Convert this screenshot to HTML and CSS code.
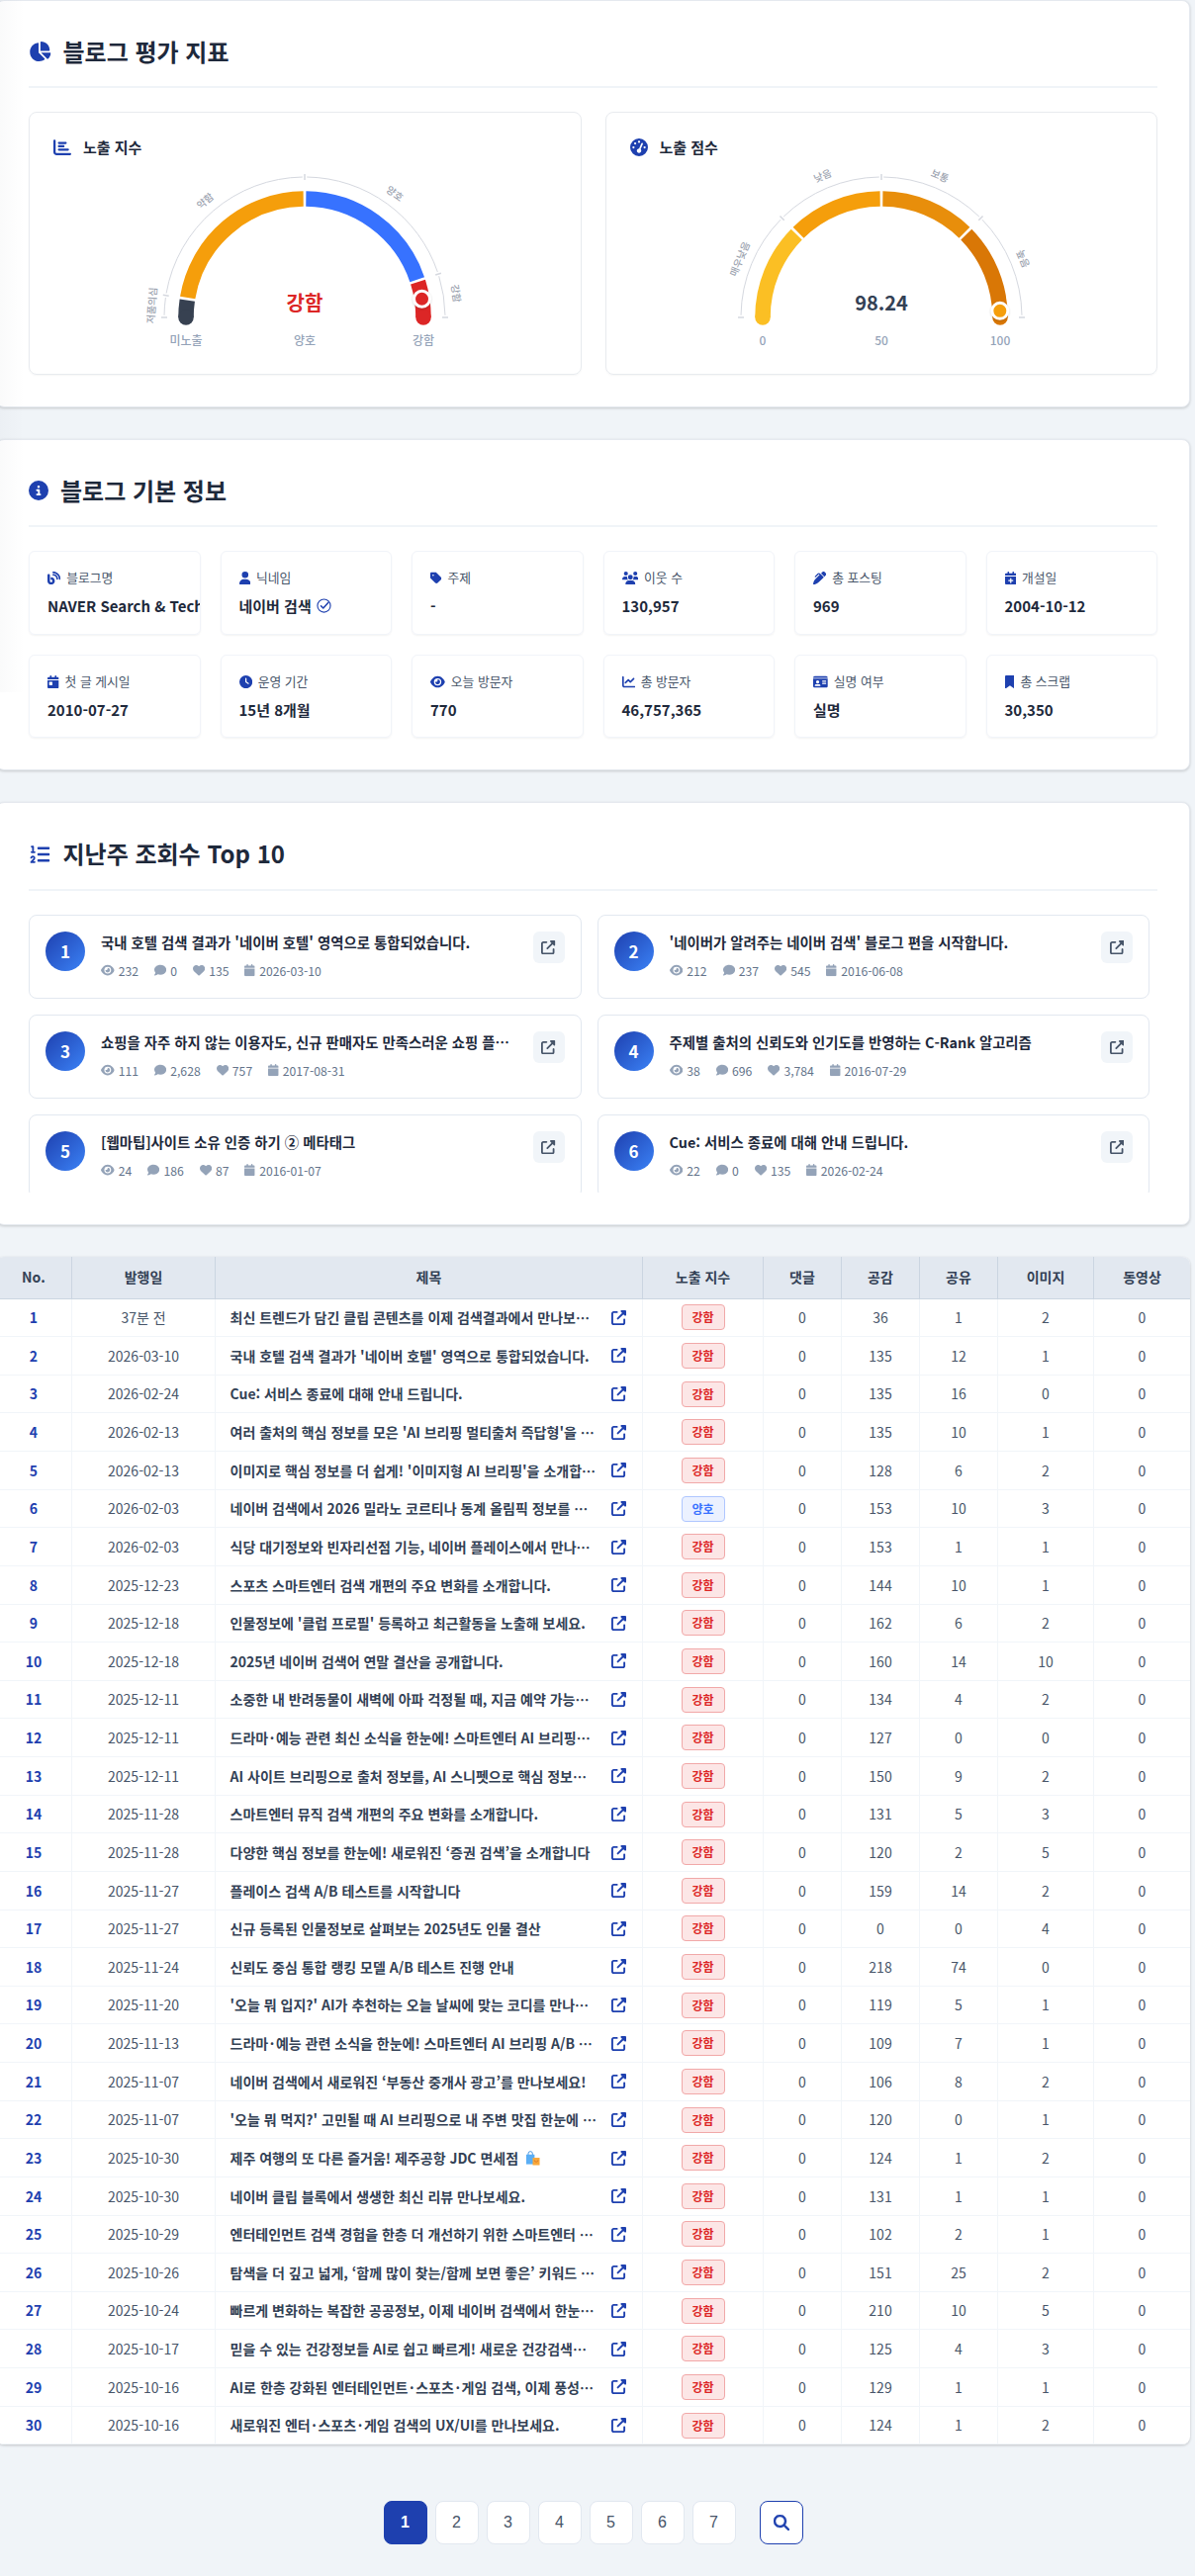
FILE: index.html
```html
<!DOCTYPE html>
<html lang="ko">
<head>
    <meta charset="UTF-8">
    <meta name="viewport" content="width=device-width, initial-scale=1.0">
    <title>블로그 분석</title>
    <link rel="stylesheet" href="styles.css">
</head>
<body>
    <svg class="sprite" aria-hidden="true">
        <symbol id="i-pie" viewBox="0 0 576 512"><path d="M304 240V16.6c0-9 7-16.6 16-16.6C443.7 0 544 100.3 544 224c0 9-7.6 16-16.6 16H304zM32 272C32 150.7 122.1 50.3 239 34.3c9.2-1.3 17 6.1 17 15.4V288L412.5 444.5c6.7 6.7 6.2 17.7-1.5 23.1C371.8 495.6 323.8 512 272 512C139.5 512 32 404.6 32 272zm526.4 16c9.3 0 16.6 7.8 15.4 17c-7.7 55.9-34.6 105.6-73.9 142.3c-6 5.6-15.4 5.2-21.2-.7L320 288H558.4z"/></symbol>
        <symbol id="i-bar" viewBox="0 0 512 512"><path d="M32 32c17.7 0 32 14.3 32 32V400c0 8.8 7.2 16 16 16H480c17.7 0 32 14.3 32 32s-14.3 32-32 32H80c-44.2 0-80-35.8-80-80V64C0 46.3 14.3 32 32 32zm96 96c0-17.7 14.3-32 32-32l192 0c17.7 0 32 14.3 32 32s-14.3 32-32 32H160c-17.7 0-32-14.3-32-32zm32 64H288c17.7 0 32 14.3 32 32s-14.3 32-32 32H160c-17.7 0-32-14.3-32-32s14.3-32 32-32zm0 96H416c17.7 0 32 14.3 32 32s-14.3 32-32 32H160c-17.7 0-32-14.3-32-32s14.3-32 32-32z"/></symbol>
        <symbol id="i-gauge" viewBox="0 0 512 512"><path d="M0 256a256 256 0 1 1 512 0A256 256 0 1 1 0 256zM288 96a32 32 0 1 0 -64 0 32 32 0 1 0 64 0zM256 416c35.3 0 64-28.7 64-64c0-17.4-6.9-33.1-18.1-44.6L366 161.7c5.3-12.1-.2-26.3-12.3-31.6s-26.3 .2-31.6 12.3L257.9 288c-.6 0-1.3 0-1.9 0c-35.3 0-64 28.7-64 64s28.7 64 64 64zM176 144a32 32 0 1 0 -64 0 32 32 0 1 0 64 0zM96 288a32 32 0 1 0 0-64 32 32 0 1 0 0 64zm352-32a32 32 0 1 0 -64 0 32 32 0 1 0 64 0z"/></symbol>
        <symbol id="i-info" viewBox="0 0 512 512"><path d="M256 512A256 256 0 1 0 256 0a256 256 0 1 0 0 512zM216 336h24V272H216c-13.3 0-24-10.7-24-24s10.7-24 24-24h48c13.3 0 24 10.7 24 24v88h8c13.3 0 24 10.7 24 24s-10.7 24-24 24H216c-13.3 0-24-10.7-24-24s10.7-24 24-24zm40-208a32 32 0 1 1 0 64 32 32 0 1 1 0-64z"/></symbol>
        <symbol id="i-blog" viewBox="0 0 512 512"><path d="M192 32c0 17.7 14.3 32 32 32c123.7 0 224 100.3 224 224c0 17.7 14.3 32 32 32s32-14.3 32-32C512 128.9 383.1 0 224 0c-17.7 0-32 14.3-32 32zm0 96c0 17.7 14.3 32 32 32c70.7 0 128 57.3 128 128c0 17.7 14.3 32 32 32s32-14.3 32-32c0-106-86-192-192-192c-17.7 0-32 14.3-32 32zM96 144c0-26.5-21.5-48-48-48S0 117.5 0 144V368c0 79.5 64.5 144 144 144s144-64.5 144-144s-64.5-144-144-144H128v96h16c26.5 0 48 21.5 48 48s-21.5 48-48 48s-48-21.5-48-48V144z"/></symbol>
        <symbol id="i-user" viewBox="0 0 448 512"><path d="M224 256A128 128 0 1 0 224 0a128 128 0 1 0 0 256zm-45.7 48C79.8 304 0 383.8 0 482.3C0 498.7 13.3 512 29.7 512H418.3c16.4 0 29.7-13.3 29.7-29.7C448 383.8 368.2 304 269.7 304H178.3z"/></symbol>
        <symbol id="i-tag" viewBox="0 0 448 512"><path d="M0 80V229.5c0 17 6.7 33.3 18.7 45.3l176 176c25 25 65.5 25 90.5 0L418.7 317.3c25-25 25-65.5 0-90.5l-176-176c-12-12-28.3-18.7-45.3-18.7H48C21.5 32 0 53.5 0 80zm112 32a32 32 0 1 1 0 64 32 32 0 1 1 0-64z"/></symbol>
        <symbol id="i-users" viewBox="0 0 640 512"><path d="M144 0a80 80 0 1 1 0 160A80 80 0 1 1 144 0zM512 0a80 80 0 1 1 0 160A80 80 0 1 1 512 0zM0 298.7C0 239.8 47.8 192 106.7 192h42.7c15.9 0 31 3.5 44.6 9.7c-1.3 7.2-1.9 14.7-1.9 22.3c0 38.2 16.8 72.5 43.3 96c-.2 0-.4 0-.7 0H21.3C9.6 320 0 310.4 0 298.7zM405.3 320c-.2 0-.4 0-.7 0c26.6-23.5 43.3-57.8 43.3-96c0-7.6-.7-15-1.9-22.3c13.6-6.3 28.7-9.7 44.6-9.7h42.7C592.2 192 640 239.8 640 298.7c0 11.8-9.6 21.3-21.3 21.3H405.3zM224 224a96 96 0 1 1 192 0 96 96 0 1 1 -192 0zM128 485.3C128 411.7 187.7 352 261.3 352H378.7C452.3 352 512 411.7 512 485.3c0 14.7-11.9 26.7-26.7 26.7H154.7c-14.7 0-26.7-11.9-26.7-26.7z"/></symbol>
        <symbol id="i-pen" viewBox="0 0 512 512"><path d="M453.3 19.3l39.4 39.4c25 25 25 65.5 0 90.5l-52.1 52.1 0 0-1-1 0 0-16-16-96-96-17-17 52.1-52.1c25-25 65.5-25 90.5 0zM241 114.9c-9.4-9.4-24.6-9.4-33.9 0L105 217c-9.4 9.4-24.6 9.4-33.9 0s-9.4-24.6 0-33.9L173.1 81c28.1-28.1 73.7-28.1 101.8 0L288 94.1l17 17 96 96 16 16 1 1-17 17L229.5 412.5c-48 48-109.2 80.8-175.8 94.1l-25 5c-7.9 1.6-16-.9-21.7-6.6s-8.1-13.8-6.6-21.7l5-25c13.3-66.6 46.1-127.8 94.1-175.8L254.1 128 241 114.9z"/></symbol>
        <symbol id="i-calendar" viewBox="0 0 448 512"><path d="M96 32V64H48C21.5 64 0 85.5 0 112v48H448V112c0-26.5-21.5-48-48-48H352V32c0-17.7-14.3-32-32-32s-32 14.3-32 32V64H160V32c0-17.7-14.3-32-32-32S96 14.3 96 32zM448 192H0V464c0 26.5 21.5 48 48 48H400c26.5 0 48-21.5 48-48V192z"/></symbol>
        <symbol id="i-calendar-plus" viewBox="0 0 448 512"><path fill-rule="evenodd" d="M96 32V64H48C21.5 64 0 85.5 0 112v48H448V112c0-26.5-21.5-48-48-48H352V32c0-17.7-14.3-32-32-32s-32 14.3-32 32V64H160V32c0-17.7-14.3-32-32-32S96 14.3 96 32zM448 192H0V464c0 26.5 21.5 48 48 48H400c26.5 0 48-21.5 48-48V192zM224 248c13.3 0 24 10.7 24 24v56h56c13.3 0 24 10.7 24 24s-10.7 24-24 24H248v56c0 13.3-10.7 24-24 24s-24-10.7-24-24V376H144c-13.3 0-24-10.7-24-24s10.7-24 24-24h56V272c0-13.3 10.7-24 24-24z"/></symbol>
        <symbol id="i-calendar-day" viewBox="0 0 448 512"><path fill-rule="evenodd" d="M96 32V64H48C21.5 64 0 85.5 0 112v48H448V112c0-26.5-21.5-48-48-48H352V32c0-17.7-14.3-32-32-32s-32 14.3-32 32V64H160V32c0-17.7-14.3-32-32-32S96 14.3 96 32zM448 192H0V464c0 26.5 21.5 48 48 48H400c26.5 0 48-21.5 48-48V192zM80 256h96c8.8 0 16 7.2 16 16v96c0 8.8-7.2 16-16 16H80c-8.8 0-16-7.2-16-16V272c0-8.8 7.2-16 16-16z"/></symbol>
        <symbol id="i-clock" viewBox="0 0 512 512"><path fill-rule="evenodd" d="M256 0a256 256 0 1 1 0 512A256 256 0 1 1 256 0zM232 120V256c0 8 4 15.5 10.7 20l96 64c11 7.4 25.9 4.4 33.3-6.7s4.4-25.9-6.7-33.3L280 243.2V120c0-13.3-10.7-24-24-24s-24 10.7-24 24z"/></symbol>
        <symbol id="i-eye" viewBox="0 0 576 512"><path d="M288 32c-80.8 0-145.5 36.8-192.6 80.6C48.6 156 17.3 208 2.5 243.7c-3.3 7.9-3.3 16.7 0 24.6C17.3 304 48.6 356 95.4 399.4C142.5 443.2 207.2 480 288 480s145.5-36.8 192.6-80.6c46.8-43.5 78.1-95.4 93-131.1c3.3-7.9 3.3-16.7 0-24.6c-14.9-35.7-46.2-87.7-93-131.1C433.5 68.8 368.8 32 288 32zM144 256a144 144 0 1 1 288 0 144 144 0 1 1 -288 0zm144-64c0 35.3-28.7 64-64 64c-7.1 0-13.9-1.2-20.3-3.3c-5.5-1.8-11.9 1.6-11.7 7.4c.3 6.9 1.3 13.8 3.2 20.7c13.7 51.2 66.4 81.6 117.6 67.9s81.6-66.4 67.9-117.6c-11.1-41.5-47.8-69.4-88.6-71.1c-5.8-.2-9.2 6.1-7.4 11.7c2.1 6.4 3.3 13.2 3.3 20.3z" fill-rule="evenodd"/></symbol>
        <symbol id="i-line" viewBox="0 0 512 512"><path d="M64 64c0-17.7-14.3-32-32-32S0 46.3 0 64V400c0 44.2 35.8 80 80 80H480c17.7 0 32-14.3 32-32s-14.3-32-32-32H80c-8.8 0-16-7.2-16-16V64zm406.6 86.6c12.5-12.5 12.5-32.8 0-45.3s-32.8-12.5-45.3 0L320 210.7l-57.4-57.4c-12.5-12.5-32.8-12.5-45.3 0l-112 112c-12.5 12.5-12.5 32.8 0 45.3s32.8 12.5 45.3 0L240 221.3l57.4 57.4c12.5 12.5 32.8 12.5 45.3 0l128-128z"/></symbol>
        <symbol id="i-idcard" viewBox="0 0 576 512"><path fill-rule="evenodd" d="M0 96l576 0c0-35.3-28.7-64-64-64H64C28.7 32 0 60.7 0 96zm0 32V416c0 35.3 28.7 64 64 64H512c35.3 0 64-28.7 64-64V128H0zM64 405.3c0-29.5 23.9-53.3 53.3-53.3H234.7c29.5 0 53.3 23.9 53.3 53.3c0 5.9-4.8 10.7-10.7 10.7H74.7c-5.9 0-10.7-4.8-10.7-10.7zM176 192a64 64 0 1 1 0 128 64 64 0 1 1 0-128zm176 16c0-8.8 7.2-16 16-16H496c8.8 0 16 7.2 16 16s-7.2 16-16 16H368c-8.8 0-16-7.2-16-16zm0 64c0-8.8 7.2-16 16-16H496c8.8 0 16 7.2 16 16s-7.2 16-16 16H368c-8.8 0-16-7.2-16-16zm0 64c0-8.8 7.2-16 16-16H496c8.8 0 16 7.2 16 16s-7.2 16-16 16H368c-8.8 0-16-7.2-16-16z"/></symbol>
        <symbol id="i-bookmark" viewBox="0 0 384 512"><path d="M0 48V487.7C0 501.1 10.9 512 24.3 512c5 0 9.9-1.5 14-4.4L192 400 345.7 507.6c4.1 2.9 9 4.4 14 4.4c13.4 0 24.3-10.9 24.3-24.3V48c0-26.5-21.5-48-48-48H48C21.5 0 0 21.5 0 48z"/></symbol>
        <symbol id="i-list" viewBox="0 0 512 512"><path d="M24 56c0-13.3 10.7-24 24-24H80c13.3 0 24 10.7 24 24V176h16c13.3 0 24 10.7 24 24s-10.7 24-24 24H40c-13.3 0-24-10.7-24-24s10.7-24 24-24H56V80H48C34.7 80 24 69.3 24 56zM86.7 341.2c-6.5-7.4-18.3-6.9-24 1.2L51.5 357.9c-7.7 10.8-22.7 13.3-33.5 5.6s-13.3-22.7-5.6-33.5l11.1-15.6c23.7-33.2 72.3-35.6 99.2-4.9c21.3 24.4 20.8 60.9-1.1 84.7L86.8 432H120c13.3 0 24 10.7 24 24s-10.7 24-24 24H32c-9.5 0-18.2-5.6-22-14.4s-2.1-18.9 4.3-25.9l72-78c5.3-5.8 5.4-14.6 .3-20.5zM224 64H480c17.7 0 32 14.3 32 32s-14.3 32-32 32H224c-17.7 0-32-14.3-32-32s14.3-32 32-32zm0 160H480c17.7 0 32 14.3 32 32s-14.3 32-32 32H224c-17.7 0-32-14.3-32-32s14.3-32 32-32zm0 160H480c17.7 0 32 14.3 32 32s-14.3 32-32 32H224c-17.7 0-32-14.3-32-32s14.3-32 32-32z"/></symbol>
        <symbol id="i-comment" viewBox="0 0 512 512"><path d="M512 240c0 114.9-114.6 208-256 208c-37.1 0-72.3-6.4-104.1-17.9c-11.9 8.7-31.3 20.6-54.3 30.6C73.6 471.1 44.7 480 16 480c-6.5 0-12.3-3.9-14.8-9.9c-2.5-6-1.1-12.8 3.4-17.4l.3-.3c.3-.3 .7-.7 1.3-1.4c1.1-1.2 2.8-3.1 4.9-5.7c4.1-5 9.6-12.4 15.2-21.6c10-16.6 19.5-38.4 21.4-62.9C17.7 326.8 0 285.1 0 240C0 125.1 114.6 32 256 32s256 93.1 256 208z"/></symbol>
        <symbol id="i-heart" viewBox="0 0 512 512"><path d="M47.6 300.4L228.3 469.1c7.5 7 17.4 10.9 27.7 10.9s20.2-3.9 27.7-10.9L464.4 300.4c30.4-28.3 47.6-68 47.6-109.5v-5.8c0-69.9-50.5-129.5-119.4-141C347 36.5 300.6 51.4 268 84L256 96 244 84c-32.6-32.6-79-47.5-124.6-39.9C50.5 55.6 0 115.2 0 185.1v5.8c0 41.5 17.2 81.2 47.6 109.5z"/></symbol>
        <symbol id="i-link" viewBox="0 0 512 512"><path d="M352 0c-12.9 0-24.6 7.8-29.6 19.8s-2.2 25.7 6.9 34.9L370.7 96 201.4 265.4c-12.5 12.5-12.5 32.8 0 45.3s32.8 12.5 45.3 0L416 141.3l41.4 41.4c9.2 9.2 22.9 11.9 34.9 6.9s19.8-16.6 19.8-29.6V32c0-17.7-14.3-32-32-32H352zM80 32C35.8 32 0 67.8 0 112V432c0 44.2 35.8 80 80 80H400c44.2 0 80-35.8 80-80V320c0-17.7-14.3-32-32-32s-32 14.3-32 32V432c0 8.8-7.2 16-16 16H80c-8.8 0-16-7.2-16-16V112c0-8.8 7.2-16 16-16H192c17.7 0 32-14.3 32-32s-14.3-32-32-32H80z"/></symbol>
        <symbol id="i-search" viewBox="0 0 512 512"><path d="M416 208c0 45.9-14.9 88.3-40 122.7L502.6 457.4c12.5 12.5 12.5 32.8 0 45.3s-32.8 12.5-45.3 0L330.7 376c-34.4 25.2-76.8 40-122.7 40C93.1 416 0 322.9 0 208S93.1 0 208 0S416 93.1 416 208zM208 352a144 144 0 1 0 0-288 144 144 0 1 0 0 288z"/></symbol>
        <symbol id="i-check" viewBox="0 0 16 16"><g fill="none" stroke="currentColor" stroke-width="1.2" stroke-linecap="round" stroke-linejoin="round"><circle cx="8" cy="8" r="7"/><path stroke-width="1.6" d="M4.8 8.2l2.4 2.5 5.3-6"/></g></symbol>
        <symbol id="i-bags" viewBox="0 0 16 16"><path fill="none" stroke="#3b8fe0" d="M3.200 5V3a2.300 2.300 0 0 1 4.600 0v2"/><path fill="#5aaef5" d="M1 4h9v10.500H1z"/><path fill="#f9a83a" d="M8 7.500h7.500v8H8z"/><path fill="none" stroke="#d9792b" d="M9.800 10a2 2 0 0 0 4 0"/></symbol>
    </svg>

    <div class="main-content">
        <section class="panel">
            <h2 class="panel-title"><svg class="icon w-576"><use href="#i-pie"/></svg>블로그 평가 지표</h2>
            <div class="gauge-grid">
                <div class="gauge-card">
                    <h3><svg class="icon"><use href="#i-bar"/></svg>노출 지수</h3>
                    <svg class="gauge" id="gauge-index" viewBox="0 0 340 188"></svg>
                </div>
                <div class="gauge-card">
                    <h3><svg class="icon"><use href="#i-gauge"/></svg>노출 점수</h3>
                    <svg class="gauge" id="gauge-score" viewBox="0 0 340 188"></svg>
                </div>
            </div>
        </section>

        <section class="panel">
            <h2 class="panel-title"><svg class="icon"><use href="#i-info"/></svg>블로그 기본 정보</h2>
            <div class="info-grid" id="info-grid"></div>
        </section>

        <section class="panel">
            <h2 class="panel-title"><svg class="icon w-576"><use href="#i-list"/></svg>지난주 조회수 Top 10</h2>
            <div class="top-list" id="top-list"></div>
        </section>

        <div class="table-wrap">
            <table class="post-table">
                <colgroup>
                    <col class="c-no"><col class="c-date"><col class="c-title"><col class="c-index">
                    <col class="c-num"><col class="c-num"><col class="c-num"><col class="c-media"><col class="c-media">
                </colgroup>
                <thead>
                    <tr><th>No.</th><th>발행일</th><th>제목</th><th>노출 지수</th><th>댓글</th><th>공감</th><th>공유</th><th>이미지</th><th>동영상</th></tr>
                </thead>
                <tbody id="post-rows"></tbody>
            </table>
        </div>

        <nav class="pagination">
            <button class="active">1</button>
            <button>2</button>
            <button>3</button>
            <button>4</button>
            <button>5</button>
            <button>6</button>
            <button>7</button>
            <button class="search"><svg class="icon"><use href="#i-search"/></svg></button>
        </nav>
    </div>

    <script>
        const icon = (name, cls = '') => `<svg class="icon ${cls}"><use href="#i-${name}"/></svg>`;

        // Gauges: positions are percentages of the half circle, left to right
        const CX = 170, CY = 155;

        function point(r, pct) {
            const a = Math.PI * (1 - pct / 100);
            return [(CX + r * Math.cos(a)).toFixed(2), (CY - r * Math.sin(a)).toFixed(2)];
        }

        function arc(r, from, to) {
            return `M${point(r, from)} A${r} ${r} 0 0 1 ${point(r, to)}`;
        }

        function drawGauge(id, stops, segments, value, text, textColor, dotColor, scale) {
            let html = '';
            segments.forEach((seg, i) => {
                const first = i === 0, last = i === segments.length - 1;
                const from = stops[i], to = stops[i + 1], mid = (from + to) / 2;
                html += `<path class="outline" d="${arc(142, from + 0.5, to - 0.5)}"/>`;
                html += `<path d="${arc(120, from + (first ? 0 : 0.35), to - (last ? 0 : 0.35))}" stroke="${seg.color}" stroke-width="15.5" fill="none"/>`;
                if (first || last) {
                    const [x, y] = point(120, first ? 0 : 100);
                    html += `<circle cx="${x}" cy="${y}" r="7.75" fill="${seg.color}"/>`;
                }
                const [lx, ly] = point(155, mid);
                html += `<text class="zone" x="${lx}" y="${ly}" dy="3.8" transform="rotate(${mid * 1.8 - 90} ${lx} ${ly})">${seg.label}</text>`;
            });
            stops.forEach(s => {
                html += `<path class="tick" d="M${point(139, s)} L${point(145, s)}"/>`;
            });
            const [dx, dy] = point(120, value);
            html += `<circle class="dot" cx="${dx}" cy="${dy}" r="8" fill="${dotColor}"/>`;
            html += `<text class="value" x="${CX}" y="148" fill="${textColor}">${text}</text>`;
            scale.forEach((s, i) => {
                html += `<text class="scale" x="${50 + i * 120}" y="183">${s}</text>`;
            });
            document.getElementById(id).innerHTML = html;
        }

        drawGauge('gauge-index', [0, 5, 50, 90, 100], [
            { label: '저품의심', color: '#374151' },
            { label: '약함', color: '#f59e0b' },
            { label: '양호', color: '#3772ff' },
            { label: '강함', color: '#dc2626' }
        ], 95, '강함', '#dc2626', '#dc2626', ['미노출', '양호', '강함']);

        drawGauge('gauge-score', [0, 25, 50, 75, 100], [
            { label: '매우낮음', color: '#fbbf24' },
            { label: '낮음', color: '#f59e0b' },
            { label: '보통', color: '#e88e0b' },
            { label: '높음', color: '#d97706' }
        ], 98.24, '98.24', '#334155', '#f59e0b', ['0', '50', '100']);

        // Basic info
        const info = [
            ['blog', '블로그명', 'NAVER Search &amp; Tech', ''],
            ['user', '닉네임', '네이버 검색 ' + icon('check', 'verified'), 'w-448'],
            ['tag', '주제', '-', 'w-448'],
            ['users', '이웃 수', '130,957', 'w-640'],
            ['pen', '총 포스팅', '969', ''],
            ['calendar-plus', '개설일', '2004-10-12', 'w-448'],
            ['calendar-day', '첫 글 게시일', '2010-07-27', 'w-448'],
            ['clock', '운영 기간', '15년 8개월', ''],
            ['eye', '오늘 방문자', '770', 'w-576'],
            ['line', '총 방문자', '46,757,365', ''],
            ['idcard', '실명 여부', '실명', 'w-576'],
            ['bookmark', '총 스크랩', '30,350', 'w-384']
        ];
        document.getElementById('info-grid').innerHTML = info.map(([ic, label, value, cls]) => `
            <div class="info-item">
                <div class="info-label">${icon(ic, cls)}${label}</div>
                <div class="info-value">${value}</div>
            </div>`).join('');

        // Top 10
        const top10 = [
            ["국내 호텔 검색 결과가 '네이버 호텔' 영역으로 통합되었습니다.", '232', '0', '135', '2026-03-10'],
            ["'네이버가 알려주는 네이버 검색' 블로그 편을 시작합니다.", '212', '237', '545', '2016-06-08'],
            ['쇼핑을 자주 하지 않는 이용자도, 신규 판매자도 만족스러운 쇼핑 플…', '111', '2,628', '757', '2017-08-31'],
            ['주제별 출처의 신뢰도와 인기도를 반영하는 C-Rank 알고리즘', '38', '696', '3,784', '2016-07-29'],
            ['[웹마팁]사이트 소유 인증 하기 ② 메타태그', '24', '186', '87', '2016-01-07'],
            ['Cue: 서비스 종료에 대해 안내 드립니다.', '22', '0', '135', '2026-02-24']
        ];
        document.getElementById('top-list').innerHTML = top10.map((p, i) => `
            <div class="top-item">
                <div class="rank">${i + 1}</div>
                <div class="top-body">
                    <div class="top-title">${p[0]}</div>
                    <div class="top-meta">
                        <span>${icon('eye', 'w-576')}${p[1]}</span>
                        <span>${icon('comment')}${p[2]}</span>
                        <span>${icon('heart')}${p[3]}</span>
                        <span>${icon('calendar', 'w-448')}${p[4]}</span>
                    </div>
                </div>
                <a class="open-btn">${icon('link')}</a>
            </div>`).join('');

        // Posts: date, title, comments, likes, shares, images, videos
        const posts = [
            ['37분 전', '최신 트렌드가 담긴 클립 콘텐츠를 이제 검색결과에서 만나보…', 0, 36, 1, 2, 0],
            ['2026-03-10', "국내 호텔 검색 결과가 '네이버 호텔' 영역으로 통합되었습니다.", 0, 135, 12, 1, 0],
            ['2026-02-24', 'Cue: 서비스 종료에 대해 안내 드립니다.', 0, 135, 16, 0, 0],
            ['2026-02-13', "여러 출처의 핵심 정보를 모은 'AI 브리핑 멀티출처 즉답형'을 …", 0, 135, 10, 1, 0],
            ['2026-02-13', "이미지로 핵심 정보를 더 쉽게! '이미지형 AI 브리핑'을 소개합…", 0, 128, 6, 2, 0],
            ['2026-02-03', '네이버 검색에서 2026 밀라노 코르티나 동계 올림픽 정보를 …', 0, 153, 10, 3, 0],
            ['2026-02-03', '식당 대기정보와 빈자리선점 기능, 네이버 플레이스에서 만나…', 0, 153, 1, 1, 0],
            ['2025-12-23', '스포츠 스마트엔터 검색 개편의 주요 변화를 소개합니다.', 0, 144, 10, 1, 0],
            ['2025-12-18', "인물정보에 '클럽 프로필' 등록하고 최근활동을 노출해 보세요.", 0, 162, 6, 2, 0],
            ['2025-12-18', '2025년 네이버 검색어 연말 결산을 공개합니다.', 0, 160, 14, 10, 0],
            ['2025-12-11', '소중한 내 반려동물이 새벽에 아파 걱정될 때, 지금 예약 가능…', 0, 134, 4, 2, 0],
            ['2025-12-11', '드라마·예능 관련 최신 소식을 한눈에! 스마트엔터 AI 브리핑…', 0, 127, 0, 0, 0],
            ['2025-12-11', 'AI 사이트 브리핑으로 출처 정보를, AI 스니펫으로 핵심 정보…', 0, 150, 9, 2, 0],
            ['2025-11-28', '스마트엔터 뮤직 검색 개편의 주요 변화를 소개합니다.', 0, 131, 5, 3, 0],
            ['2025-11-28', '다양한 핵심 정보를 한눈에! 새로워진 ‘증권 검색’을 소개합니다', 0, 120, 2, 5, 0],
            ['2025-11-27', '플레이스 검색 A/B 테스트를 시작합니다', 0, 159, 14, 2, 0],
            ['2025-11-27', '신규 등록된 인물정보로 살펴보는 2025년도 인물 결산', 0, 0, 0, 4, 0],
            ['2025-11-24', '신뢰도 중심 통합 랭킹 모델 A/B 테스트 진행 안내', 0, 218, 74, 0, 0],
            ['2025-11-20', "'오늘 뭐 입지?' AI가 추천하는 오늘 날씨에 맞는 코디를 만나…", 0, 119, 5, 1, 0],
            ['2025-11-13', '드라마·예능 관련 소식을 한눈에! 스마트엔터 AI 브리핑 A/B …', 0, 109, 7, 1, 0],
            ['2025-11-07', '네이버 검색에서 새로워진 ‘부동산 중개사 광고’를 만나보세요!', 0, 106, 8, 2, 0],
            ['2025-11-07', "'오늘 뭐 먹지?' 고민될 때 AI 브리핑으로 내 주변 맛집 한눈에 …", 0, 120, 0, 1, 0],
            ['2025-10-30', '제주 여행의 또 다른 즐거움! 제주공항 JDC 면세점 ' + icon('bags', 'bags'), 0, 124, 1, 2, 0],
            ['2025-10-30', '네이버 클립 블록에서 생생한 최신 리뷰 만나보세요.', 0, 131, 1, 1, 0],
            ['2025-10-29', '엔터테인먼트 검색 경험을 한층 더 개선하기 위한 스마트엔터 …', 0, 102, 2, 1, 0],
            ['2025-10-26', '탐색을 더 깊고 넓게, ‘함께 많이 찾는/함께 보면 좋은’ 키워드 …', 0, 151, 25, 2, 0],
            ['2025-10-24', '빠르게 변화하는 복잡한 공공정보, 이제 네이버 검색에서 한눈…', 0, 210, 10, 5, 0],
            ['2025-10-17', '믿을 수 있는 건강정보들 AI로 쉽고 빠르게! 새로운 건강검색…', 0, 125, 4, 3, 0],
            ['2025-10-16', 'AI로 한층 강화된 엔터테인먼트·스포츠·게임 검색, 이제 풍성…', 0, 129, 1, 1, 0],
            ['2025-10-16', '새로워진 엔터·스포츠·게임 검색의 UX/UI를 만나보세요.', 0, 124, 1, 2, 0]
        ];
        const spaceDots = s => s.replace(/·/g, '<i class="mid-dot">·</i>');
        document.getElementById('post-rows').innerHTML = posts.map((p, i) => `
            <tr>
                <td class="no">${i + 1}</td>
                <td>${p[0]}</td>
                <td><div class="title-cell"><span>${spaceDots(p[1])}</span>${icon('link')}</div></td>
                <td>${i === 5 ? '<span class="badge good">양호</span>' : '<span class="badge strong">강함</span>'}</td>
                ${p.slice(2).map(n => `<td>${n}</td>`).join('')}
            </tr>`).join('');
    </script>
</body>
</html>
```

FILE: styles.css
```css
* {
    box-sizing: border-box;
}

body {
    margin: 0;
    background: #f0f4f8;
    color: #1e293b;
    font-family: 'Noto Sans CJK KR', sans-serif;
    line-height: 1.6;
    overflow-x: hidden;
}

/* soft shadow along the left edge */
body::before {
    content: '';
    position: absolute;
    top: 0;
    left: 0;
    width: 25px;
    height: 700px;
    background: linear-gradient(to right, rgba(15, 23, 42, 0.02), transparent);
    pointer-events: none;
}

.sprite { display: none; }

.icon {
    width: 1em;
    height: 1em;
    flex: none;
    fill: currentColor;
    color: #1e40af;
}
.icon.w-384 { width: 0.75em; }
.icon.w-448 { width: 0.875em; }
.icon.w-576 { width: 1.125em; }
.icon.w-640 { width: 1.25em; }

.main-content {
    width: 1207px;
    margin-left: -4px;
}

/* Panels */
.panel {
    background: #fff;
    border: 1px solid #e5e9ef;
    border-radius: 8px;
    padding: 32px;
    margin-bottom: 32px;
    box-shadow: 0 1px 3px rgba(0, 0, 0, 0.18);
}

.panel-title {
    display: flex;
    align-items: center;
    gap: 12px;
    margin: 0 0 24px;
    padding-bottom: 16px;
    border-bottom: 2px solid #f0f4f8;
    font-size: 24px;
    font-weight: 700;
}
.panel-title .icon { font-size: 20px; }

/* Gauges */
.gauge-grid {
    display: grid;
    grid-template-columns: 1fr 1fr;
    gap: 24px;
}

.gauge-card {
    height: 265.6px;
    padding: 23px 24px;
    border: 1px solid #e8ebef;
    border-radius: 8px;
    box-shadow: 0 1px 2px rgba(0, 0, 0, 0.04);
}
.gauge-card h3 {
    display: flex;
    align-items: center;
    gap: 12px;
    margin: 0 0 4.6px;
    font-size: 15px;
}
.gauge-card h3 .icon { font-size: 18px; }

.gauge {
    display: block;
    width: 340px;
    height: 188px;
    margin: 0 auto;
    overflow: visible;
}
.gauge text { text-anchor: middle; }
.gauge .outline {
    fill: none;
    stroke: #d5d8df;
    stroke-width: 1;
}
.gauge .tick {
    stroke: #d5d8df;
    stroke-width: 1.5;
}
.gauge .zone {
    font-size: 10px;
    font-weight: 500;
    fill: #9ca3af;
}
.gauge .dot {
    stroke: #fff;
    stroke-width: 3;
    filter: drop-shadow(0 1px 1px rgba(0, 0, 0, 0.15));
}
.gauge .value {
    font-size: 20px;
    font-weight: 700;
}
.gauge .scale {
    font-size: 12px;
    font-weight: 500;
    fill: #94a3b8;
}

/* Basic info */
.info-grid {
    display: grid;
    grid-template-columns: repeat(6, 1fr);
    grid-template-rows: 85px 84px;
    gap: 20px;
}

.info-item {
    min-width: 0;
    padding: 16px 18px;
    border: 1px solid #f1f4f9;
    border-radius: 6px;
    box-shadow: 0 1px 2px rgba(0, 0, 0, 0.05);
    overflow: hidden;
    white-space: nowrap;
}

.info-label {
    display: flex;
    align-items: center;
    gap: 6px;
    margin-bottom: 6px;
    font-size: 12.8px;
    color: #475569;
}
.info-label .icon {
    margin-bottom: 1px;
    font-size: 13.2px;
}
.info-value {
    font-size: 15px;
    font-weight: 700;
}
.verified {
    width: 15px;
    height: 15px;
    margin-left: 1px;
    vertical-align: -1px;
}

/* Top 10 */
.top-list {
    display: grid;
    grid-template-columns: 1fr 1fr;
    grid-auto-rows: 85px;
    gap: 16px;
    height: 280.8px;
    padding-right: 8px;
    overflow: hidden;
}

.top-item {
    display: flex;
    align-items: flex-start;
    gap: 16px;
    padding: 16px;
    border: 1px solid #e2e8f0;
    border-radius: 8px;
}

.rank {
    width: 40px;
    height: 40px;
    flex: none;
    border-radius: 50%;
    background: linear-gradient(135deg, #1e40af, #3b82f6);
    color: #fff;
    font-size: 17px;
    font-weight: 700;
    line-height: 39px;
    text-align: center;
}

.top-body {
    flex: 1;
    min-width: 0;
    white-space: nowrap;
}
.top-title {
    margin-bottom: 10px;
    font-size: 14.4px;
    font-weight: 700;
    line-height: 21px;
}
.top-meta {
    display: flex;
    gap: 16px;
    font-size: 12.2px;
    color: #64748b;
}
.top-meta span {
    display: flex;
    align-items: center;
    gap: 4px;
}
.top-meta .icon {
    margin-bottom: 2px;
    color: #94a3b8;
}

.open-btn {
    display: flex;
    align-items: center;
    justify-content: center;
    width: 32px;
    height: 32px;
    flex: none;
    border-radius: 6px;
    background: #f1f5f9;
    font-size: 14.4px;
}
.open-btn .icon { color: #475569; }

/* Post table */
.table-wrap {
    background: #fff;
    border-radius: 8px;
    box-shadow: 0 1px 3px rgba(0, 0, 0, 0.2);
    overflow: hidden;
}

.post-table {
    width: 100%;
    table-layout: fixed;
    border-collapse: separate;
    border-spacing: 0;
    font-size: 14px;
    color: #475569;
    text-align: center;
}
.c-no { width: 77px; }
.c-date { width: 145px; }
.c-title { width: 432px; }
.c-index { width: 122px; }
.c-num { width: 79px; }
.c-media { width: 97px; }

.post-table th {
    height: 43px;
    padding: 0;
    background: #e2e8f0;
    border-right: 1px solid #cbd5e1;
    border-bottom: 1px solid #cbd5e1;
    color: #334155;
}
.post-table td {
    height: 38.63px;
    padding: 0;
    border-right: 1px solid #f1f5f9;
    border-bottom: 1px solid #f1f5f9;
}
.post-table th:last-child,
.post-table td:last-child { border-right: none; }
.post-table .no {
    color: #1e40af;
    font-weight: 700;
}

.title-cell {
    display: flex;
    align-items: center;
    justify-content: space-between;
    padding: 0 16px 0 14.5px;
    color: #334155;
    font-weight: 700;
    white-space: nowrap;
}
.title-cell .icon { font-size: 15px; }
.title-cell .bags {
    margin-left: 3px;
    vertical-align: -2px;
}
.mid-dot {
    padding: 0 1.6px;
    font-style: normal;
}

.badge {
    display: inline-block;
    width: 44px;
    height: 26px;
    border: 1px solid;
    border-radius: 4px;
    font-size: 12px;
    font-weight: 700;
    line-height: 24px;
    vertical-align: middle;
}
.badge.strong {
    background: #fce6e6;
    border-color: #f1a8a8;
    color: #dc2626;
}
.badge.good {
    background: #ebf1ff;
    border-color: #afc7ff;
    color: #3772ff;
}

/* Pagination */
.pagination {
    display: flex;
    justify-content: center;
    gap: 8px;
    padding: 56.5px 0 32px;
}
.pagination button {
    width: 44px;
    height: 44px;
    padding: 0;
    border: 1px solid #e2e8f0;
    border-radius: 8px;
    background: #fff;
    color: #475569;
    font-family: 'Liberation Sans', sans-serif;
    font-size: 16px;
}
.pagination .active {
    background: #1e40af;
    border-color: #1e40af;
    color: #fff;
    font-weight: 700;
}
.pagination .search {
    display: flex;
    align-items: center;
    justify-content: center;
    margin-left: 16px;
    border-color: #1e40af;
}
.pagination .search .icon {
    overflow: visible;
    stroke: currentColor;
    stroke-width: 14;
}
```
